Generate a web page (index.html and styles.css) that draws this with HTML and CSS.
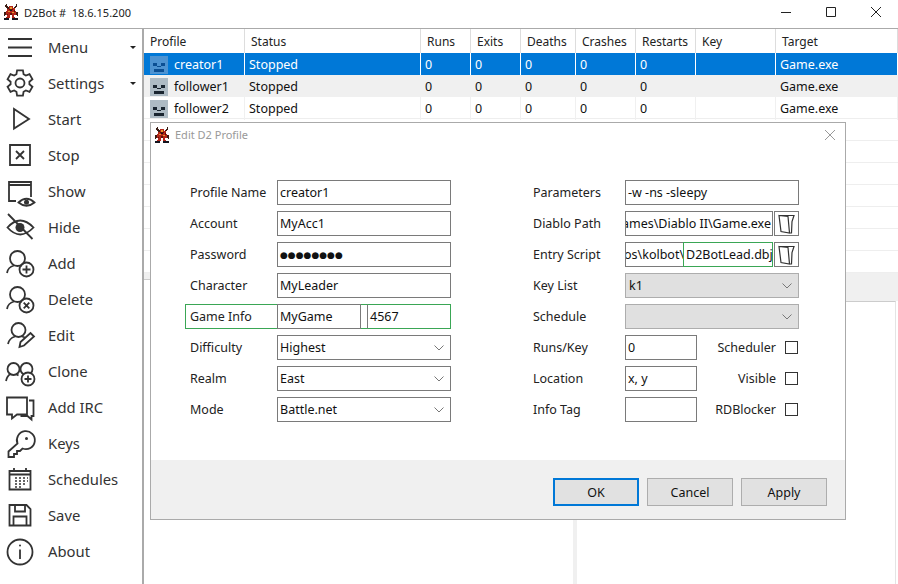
FILE: index.html
```html
<!DOCTYPE html>
<html lang="en">
<head>
    <meta charset="UTF-8">
    <title>D2Bot #</title>
    <link rel="stylesheet" href="styles.css">
</head>
<body>
<div class="app">
    <header class="titlebar">
        <svg class="app-icon" viewBox="0 0 16 16"><path fill="#3a1c14" d="M3 0h1v2h1v1h1v2H4V4H3V3H2V1h1zM13 0h1v3h-1v1h-1v2h-1V3h1V2h1zM1 8h2v3H2v1H1zM13 8h2v4h-1v-1h-1z"/><path fill="#b3261a" d="M6 2h4v2h2v3h1v4h-2v2h1v1H9v-3H7v3H3v-1h1v-2H3V7h1V5h2z"/><path fill="#e89a2c" d="M7 3h2v2H7zM5 7h2v1H5zM9 8h2v1H9z"/><path fill="#5c120c" d="M6 5h4v1H6zM7 9h2v2H7zM4 10h1v1H4zM11 6h1v2h-1z"/><path fill="#14141f" d="M1 14h5v2H1zM9 14h6v2H9zM7 6h2v1H7z"/></svg>
        <span class="app-title">D2Bot #&nbsp; 18.6.15.200</span>
        <div class="window-buttons">
            <svg viewBox="0 0 10 10"><path d="M0 5.500h10"/></svg>
            <svg viewBox="0 0 10 10"><path d="M.5.5h9v9h-9z"/></svg>
            <svg viewBox="0 0 10 10"><path d="M0 0l10 10M10 0L0 10"/></svg>
        </div>
    </header>

    <div class="workspace">
        <nav class="sidebar">
            <div class="nav-item">
                <svg class="nav-icon" viewBox="0 0 32 32"><path d="M3 7h24M3 15.500h24M3 24h24"/></svg>
                <span>Menu</span><i class="caret"></i>
            </div>
            <div class="nav-item">
                <svg class="nav-icon" viewBox="0 0 32 32"><path d="M18.560 6.190L17.920 2.330H12.080L11.440 6.190L9.150 7.510L5.490 6.130L2.570 11.200L5.590 13.680V16.320L2.570 18.800L5.490 23.870L9.150 22.490L11.440 23.810L12.080 27.670H17.920L18.560 23.810L20.850 22.490L24.510 23.870L27.430 18.800L24.410 16.320V13.680L27.430 11.200L24.510 6.130L20.850 7.510z"/><circle cx="15" cy="15" r="4.500"/></svg>
                <span>Settings</span><i class="caret"></i>
            </div>
            <div class="nav-item">
                <svg class="nav-icon" viewBox="0 0 32 32"><path d="M9 5v19.500L24 15z"/></svg>
                <span>Start</span>
            </div>
            <div class="nav-item">
                <svg class="nav-icon" viewBox="0 0 32 32"><path d="M5 5h20v20H5zM11 11l8 8M19 11l-8 8"/></svg>
                <span>Stop</span>
            </div>
            <div class="nav-item">
                <svg class="nav-icon" viewBox="0 0 32 32"><path d="M11 25H4V6h22v15M4 9h22"/><path d="M13.500 26.500q8-7.500 16 0q-8 6.500-16 0z"/><circle class="solid" cx="21.500" cy="26.300" r="2.500"/></svg>
                <span>Show</span>
            </div>
            <div class="nav-item">
                <svg class="nav-icon" viewBox="0 0 32 32"><path d="M2.500 15.500q12.500-14 26 0q-13.500 14-26 0zM3 2l24.500 25"/><circle class="solid" cx="15" cy="15.500" r="4.500"/></svg>
                <span>Hide</span>
            </div>
            <div class="nav-item">
                <svg class="nav-icon" viewBox="0 0 32 32"><circle cx="12.500" cy="10.500" r="7.500"/><path d="M2 25q1-6 7-7.500M16 17.500l1 .5"/><circle cx="21.500" cy="21.500" r="7"/><path d="M21.500 17.500v8M17.500 21.500h8"/></svg>
                <span>Add</span>
            </div>
            <div class="nav-item">
                <svg class="nav-icon" viewBox="0 0 32 32"><circle cx="12.500" cy="10.500" r="7.500"/><path d="M2 25q1-6 7-7.500M16 17.500l1 .5"/><circle cx="21.500" cy="21.500" r="7"/><path d="M18.700 18.700l5.600 5.600M24.300 18.700l-5.600 5.600"/></svg>
                <span>Delete</span>
            </div>
            <div class="nav-item">
                <svg class="nav-icon" viewBox="0 0 32 32"><circle cx="13.500" cy="10" r="7"/><path d="M3 24q1-5.500 7-7.500M17 16.500l3 1"/><path d="M14.500 27l1-5 10-9 3.500 3.500-10 9z"/></svg>
                <span>Edit</span>
            </div>
            <div class="nav-item">
                <svg class="nav-icon" viewBox="0 0 32 32"><circle cx="8.500" cy="13" r="6"/><circle cx="21.500" cy="13" r="6"/><path d="M1 25q1-5 4.500-7M11 18l2.500 1.500"/><circle cx="23" cy="23" r="6.500" fill="#fff"/><path d="M23 19.500v7M19.500 23h7"/></svg>
                <span>Clone</span>
            </div>
            <div class="nav-item">
                <svg class="nav-icon" viewBox="0 0 32 32"><path d="M2 5.500h20v17H12l-5 4v-4H2zM24 8.500h4.500v15.500H26.500v3.500l-4-3.500h-7"/></svg>
                <span>Add IRC</span>
            </div>
            <div class="nav-item">
                <svg class="nav-icon" viewBox="0 0 32 32"><path d="M12.500 15.500a9 9 0 1 1 5 5L15 23h-3v3H9v3H3.500v-5.500z"/><circle class="solid" cx="21.500" cy="10.500" r="1.500"/></svg>
                <span>Keys</span>
            </div>
            <div class="nav-item">
                <svg class="nav-icon" viewBox="0 0 32 32"><path d="M4.500 7h21v18.500h-21zM4.500 10.500h21M9 4v4M21 4v4"/><path class="dots" d="M10 14h2M14 14h2M18 14h2M22 14h1M10 17h2M14 17h2M18 17h2M22 17h1M10 20h2M14 20h2M18 20h2M10 23h2M14 23h2"/></svg>
                <span>Schedules</span>
            </div>
            <div class="nav-item">
                <svg class="nav-icon" viewBox="0 0 32 32"><path d="M4.500 5h17l4 4v16.500h-21zM10 5v6.500h10V5M8.500 25.500v-9h13v9"/></svg>
                <span>Save</span>
            </div>
            <div class="nav-item">
                <svg class="nav-icon" viewBox="0 0 32 32"><circle cx="15" cy="16" r="12.500"/><path d="M15 13.500V23"/><circle class="solid" cx="15" cy="9.500" r="1"/></svg>
                <span>About</span>
            </div>
        </nav>

        <main class="content">
            <div class="grid-row grid-head">
                <div>Profile</div><div>Status</div><div>Runs</div><div>Exits</div><div>Deaths</div><div>Crashes</div><div>Restarts</div><div>Key</div><div>Target</div>
            </div>
            <div class="grid-row selected">
                <div class="profile-cell"><svg class="skull" viewBox="0 0 18 18"><rect width="18" height="18" fill="#4d93d2"/><path fill="#0b4f94" d="M3 7h4v3H3zM11 7h4v3h-4zM7 10h4v1H7zM4 13h10v3H4z"/></svg>creator1</div>
                <div>Stopped</div><div>0</div><div>0</div><div>0</div><div>0</div><div>0</div><div></div><div>Game.exe</div>
            </div>
            <div class="grid-row alt">
                <div class="profile-cell"><svg class="skull" viewBox="0 0 18 18"><rect width="18" height="18" fill="#aebbc4"/><path fill="#1a2530" d="M3 7h4v3H3zM11 7h4v3h-4zM7 10h4v1H7zM4 13h10v3H4z"/></svg>follower1</div>
                <div>Stopped</div><div>0</div><div>0</div><div>0</div><div>0</div><div>0</div><div></div><div>Game.exe</div>
            </div>
            <div class="grid-row">
                <div class="profile-cell"><svg class="skull" viewBox="0 0 18 18"><rect width="18" height="18" fill="#aebbc4"/><path fill="#1a2530" d="M3 7h4v3H3zM11 7h4v3h-4zM7 10h4v1H7zM4 13h10v3H4z"/></svg>follower2</div>
                <div>Stopped</div><div>0</div><div>0</div><div>0</div><div>0</div><div>0</div><div></div><div>Game.exe</div>
            </div>
            <div class="grid-row"></div>
            <div class="grid-row"></div>
            <div class="grid-row"></div>
            <div class="grid-row"></div>
            <div class="grid-row"></div>
            <div class="grid-row"></div>
            <div class="grid-row"></div>
            <div class="tab-strip"></div>
            <div class="panels">
                <div class="panel"></div>
                <div class="panel"></div>
            </div>
        </main>
    </div>

    <section class="dialog">
        <header class="dialog-title">
            <svg class="app-icon" viewBox="0 0 16 16"><path fill="#3a1c14" d="M3 0h1v2h1v1h1v2H4V4H3V3H2V1h1zM13 0h1v3h-1v1h-1v2h-1V3h1V2h1zM1 8h2v3H2v1H1zM13 8h2v4h-1v-1h-1z"/><path fill="#b3261a" d="M6 2h4v2h2v3h1v4h-2v2h1v1H9v-3H7v3H3v-1h1v-2H3V7h1V5h2z"/><path fill="#e89a2c" d="M7 3h2v2H7zM5 7h2v1H5zM9 8h2v1H9z"/><path fill="#5c120c" d="M6 5h4v1H6zM7 9h2v2H7zM4 10h1v1H4zM11 6h1v2h-1z"/><path fill="#14141f" d="M1 14h5v2H1zM9 14h6v2H9zM7 6h2v1H7z"/></svg>
            <span>Edit D2 Profile</span>
            <svg class="dialog-close" viewBox="0 0 10 10"><path d="M0 0l10 10M10 0L0 10"/></svg>
        </header>

        <div class="dialog-body">
            <div class="form-col">
                <div class="form-row"><label>Profile Name</label><div class="field wide">creator1</div></div>
                <div class="form-row"><label>Account</label><div class="field wide">MyAcc1</div></div>
                <div class="form-row"><label>Password</label><div class="field wide password">●●●●●●●●</div></div>
                <div class="form-row"><label>Character</label><div class="field wide">MyLeader</div></div>
                <div class="form-row game-info">
                    <label>Game Info</label>
                    <div class="field half">MyGame</div>
                    <div class="field half focus-edge">4567</div>
                </div>
                <div class="form-row"><label>Difficulty</label><div class="field wide select">Highest<svg class="chevron" viewBox="0 0 10 6"><path d="M.5.5L5 5 9.500.5"/></svg></div></div>
                <div class="form-row"><label>Realm</label><div class="field wide select">East<svg class="chevron" viewBox="0 0 10 6"><path d="M.5.5L5 5 9.500.5"/></svg></div></div>
                <div class="form-row"><label>Mode</label><div class="field wide select">Battle.net<svg class="chevron" viewBox="0 0 10 6"><path d="M.5.5L5 5 9.500.5"/></svg></div></div>
            </div>

            <div class="form-col">
                <div class="form-row right-row"><label>Parameters</label><div class="field wide">-w -ns -sleepy</div></div>
                <div class="form-row right-row">
                    <label>Diablo Path</label>
                    <div class="field path"><span class="path-end">ames\Diablo II\Game.exe</span></div>
                    <button class="browse" type="button"><svg viewBox="0 0 17 20"><path d="M1 1.500l9 1 1.500 16.500-8.500-1.500zM1 1.500h15l-2 6-.5 11.500h-2"/></svg></button>
                </div>
                <div class="form-row right-row">
                    <label>Entry Script</label>
                    <div class="field path path-open">
                        <span class="path-start">os\kolbot\</span>
                        <span class="path-overlay">D2BotLead.dbj</span>
                    </div>
                    <button class="browse" type="button"><svg viewBox="0 0 17 20"><path d="M1 1.500l9 1 1.500 16.500-8.500-1.500zM1 1.500h15l-2 6-.5 11.500h-2"/></svg></button>
                </div>
                <div class="form-row right-row"><label>Key List</label><div class="field wide select disabled">k1<svg class="chevron" viewBox="0 0 10 6"><path d="M.5.5L5 5 9.500.5"/></svg></div></div>
                <div class="form-row right-row"><label>Schedule</label><div class="field wide select disabled"><svg class="chevron" viewBox="0 0 10 6"><path d="M.5.5L5 5 9.500.5"/></svg></div></div>
                <div class="form-row right-row"><label>Runs/Key</label><div class="field short">0</div><span class="check-label">Scheduler</span><i class="checkbox"></i></div>
                <div class="form-row right-row"><label>Location</label><div class="field short">x, y</div><span class="check-label">Visible</span><i class="checkbox"></i></div>
                <div class="form-row right-row"><label>Info Tag</label><div class="field short"></div><span class="check-label">RDBlocker</span><i class="checkbox"></i></div>
            </div>
        </div>

        <footer class="dialog-footer">
            <button class="btn btn-default" type="button">OK</button>
            <button class="btn" type="button">Cancel</button>
            <button class="btn" type="button">Apply</button>
        </footer>
    </section>
</div>
</body>
</html>
```
FILE: styles.css
```css
* {
    box-sizing: border-box;
}
html, body {
    margin: 0;
    height: 100%;
    overflow: hidden;
    background: #fff;
}
body {
    font-family: "Noto Sans", "Open Sans", sans-serif;
    font-size: 12.5px;
    color: #111;
}
.app {
    position: relative;
    width: 898px;
    height: 584px;
    display: flex;
    flex-direction: column;
}

/* title bar */
.titlebar {
    height: 29px;
    flex: none;
    display: flex;
    align-items: center;
    padding: 0 0 4px 3px;
    border-bottom: 1px solid #aaa;
}
.app-icon {
    width: 16px;
    height: 16px;
    flex: none;
}
.app-title {
    margin-left: 5px;
    font-size: 11px;
    color: #222;
}
.window-buttons {
    margin-left: auto;
    display: flex;
    gap: 35px;
    padding-right: 17px;
}
.window-buttons svg {
    width: 10px;
    height: 10px;
    fill: none;
    stroke: #222;
    stroke-width: 1;
}

/* left menu */
.workspace {
    flex: 1;
    display: flex;
    min-height: 0;
}
.sidebar {
    width: 144px;
    flex: none;
    padding-top: 1px;
    border-right: 2px solid #aaa;
}
.nav-item {
    height: 36px;
    display: flex;
    align-items: center;
    padding-left: 5px;
    position: relative;
    font-size: 14.8px;
    color: #333;
}
.nav-item span {
    margin: 0 0 2px 11px;
}
.nav-icon {
    width: 32px;
    height: 32px;
    flex: none;
    fill: none;
    stroke: #333;
    stroke-width: 1.8;
}
.nav-icon .solid {
    fill: #333;
    stroke: none;
}
.nav-icon .dots {
    stroke-width: 1.4;
}
.caret {
    position: absolute;
    right: 6px;
    top: 16px;
    border-top: 3px solid #222;
    border-left: 3px solid transparent;
    border-right: 3px solid transparent;
}

/* profile list */
.content {
    flex: 1;
    display: flex;
    flex-direction: column;
    min-width: 0;
}
.grid-row {
    display: grid;
    grid-template-columns: 101px 176px 50px 50px 55px 60px 60px 80px 1fr;
    height: 22px;
    flex: none;
    border-bottom: 1px solid #eee;
    align-items: center;
}
.grid-row > div {
    height: 100%;
    padding-left: 4px;
    line-height: 23px;
    white-space: nowrap;
    border-right: 1px solid #f0f0f0;
}
.grid-head {
    height: 24px;
    border-bottom: none;
    color: #222;
    font-size: 12px;
}
.grid-head > div {
    padding-left: 6px;
    line-height: 26px;
    border-right: 1px solid #ddd;
}
.selected {
    background: #0078d7;
    color: #fff;
    border-bottom: none;
}
.selected > div {
    border-right: 1px solid #fff;
}
.alt {
    background: #f0f0f0;
    border-bottom: none;
}
.profile-cell {
    display: flex;
    align-items: center;
    gap: 6px;
    padding-left: 6px !important;
}
.skull {
    width: 18px;
    height: 18px;
    flex: none;
}
.tab-strip {
    height: 28px;
    flex: none;
    background: #f0f0f0;
}
.panels {
    flex: 1;
    display: flex;
    background: #fff;
}
.panel {
    flex: 1;
    background: #fff;
    border-top: 1px solid #ccc;
    border-right: 1px solid #e4e4e4;
    margin-right: 2px;
}
.panel:first-child {
    flex: none;
    width: 433px;
    margin: -22px 0 0;
    border-right: 4px solid #f0f0f0;
}

/* edit dialog, floats over the main window */
.dialog {
    position: absolute;
    left: 150px;
    top: 122px;
    width: 696px;
    height: 398px;
    background: #fff;
    border: 1px solid #aaa;
    display: flex;
    flex-direction: column;
}
.dialog-title {
    height: 23px;
    flex: none;
    display: flex;
    align-items: center;
    padding-left: 3px;
    color: #999;
    font-size: 11px;
}
.dialog-title span {
    margin-left: 5px;
}
.dialog-close {
    width: 10px;
    height: 10px;
    margin-left: auto;
    margin-right: 10px;
    fill: none;
    stroke: #999;
}
.dialog-body {
    flex: 1;
    display: flex;
    gap: 82px;
    padding: 34px 0 0 39px;
}
.form-col {
    display: flex;
    flex-direction: column;
    gap: 6px;
}
.form-row {
    height: 25px;
    display: flex;
    align-items: center;
}
.form-row label {
    width: 87px;
    flex: none;
    color: #222;
}
.right-row label {
    width: 92px;
}
.field {
    height: 25px;
    border: 1px solid #7a7a7a;
    background: #fff;
    padding-left: 2px;
    line-height: 23px;
    white-space: nowrap;
    overflow: hidden;
    position: relative;
}
.wide {
    width: 174px;
}
.half {
    width: 84px;
}
.short {
    width: 72px;
}
.password {
    font-family: "DejaVu Sans", sans-serif;
    font-size: 9px;
    line-height: 24px;
}
.game-info {
    margin-left: -5px;
    padding-left: 5px;
    gap: 6px;
    outline: 1px solid #3aa655;
    outline-offset: -1px;
}
.game-info label {
    margin-right: -6px;
}
.focus-edge {
    border-color: #3aa655 #3aa655 #3aa655 #7a7a7a;
}
.select {
    padding-right: 20px;
}
.chevron {
    position: absolute;
    right: 6px;
    top: 9px;
    width: 10px;
    height: 6px;
    fill: none;
    stroke: #777;
}
.disabled {
    background: #e0e0e0;
    border-color: #adadad;
    padding-left: 3px;
}
.path {
    width: 148px;
}
.path-open {
    overflow: visible;
}
.path-end {
    position: absolute;
    right: 1px;
}
.path-start {
    position: absolute;
    left: 0;
    width: 57px;
    overflow: hidden;
    text-indent: -2px;
}
.path-overlay {
    position: absolute;
    left: 57px;
    right: -1px;
    top: -1px;
    bottom: -1px;
    background: #fff;
    border: 1px solid #3aa655;
    padding-left: 2px;
    line-height: 23px;
}
.browse {
    width: 25px;
    height: 25px;
    margin-left: 1px;
    padding: 1px 3px;
    background: #fff;
    border: 1px solid #7a7a7a;
}
.browse svg {
    width: 17px;
    height: 20px;
    display: block;
    fill: none;
    stroke: #333;
    stroke-width: 1.2;
}
.check-label {
    width: 79px;
    text-align: right;
    color: #222;
}
.checkbox {
    width: 13px;
    height: 13px;
    margin-left: 9px;
    border: 1px solid #333;
}
.dialog-footer {
    height: 59px;
    flex: none;
    background: #f0f0f0;
    display: flex;
    justify-content: flex-end;
    gap: 8px;
    padding: 18px 18px 0 0;
}
.btn {
    width: 86px;
    height: 28px;
    font: inherit;
    color: #111;
    background: #e1e1e1;
    border: 1px solid #adadad;
    padding: 0;
}
.btn-default {
    border: 2px solid #0078d7;
}
```
